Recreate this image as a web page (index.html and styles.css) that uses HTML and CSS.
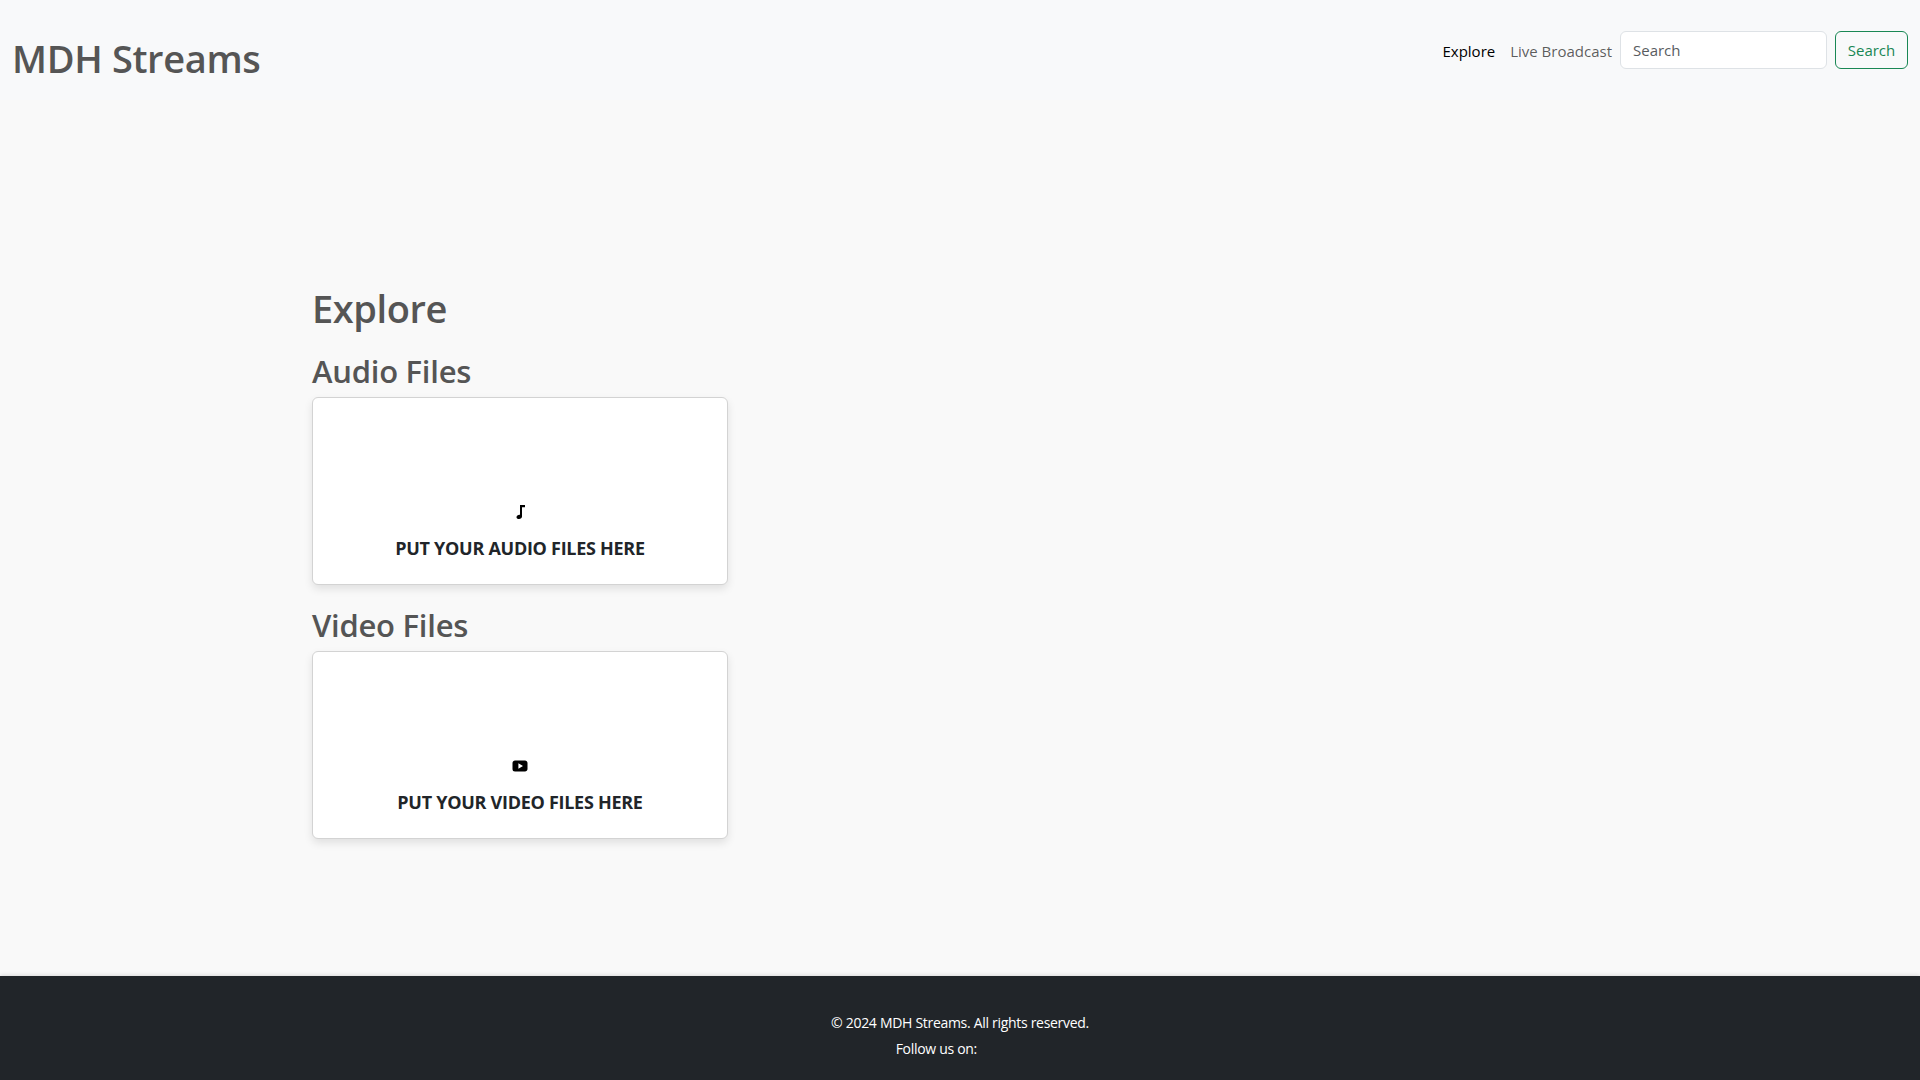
FILE: index.html
```html
<!DOCTYPE html>
<html lang="en">
<head>
    <meta charset="UTF-8">
    <meta name="viewport" content="width=device-width, initial-scale=1.0">
    <title>MDH Streams</title>
    <link rel="stylesheet" href="styles.css">
</head>
<body>
    <header class="site-header">
        <h1 class="brand">MDH Streams</h1>
        <nav class="site-nav">
            <a class="nav-link active" href="#">Explore</a>
            <a class="nav-link" href="#">Live Broadcast</a>
            <form class="search-form">
                <input class="search-input" type="search" placeholder="Search">
                <button class="search-btn" type="button">Search</button>
            </form>
        </nav>
    </header>
    <main class="explore">
        <h1 class="page-title">Explore</h1>
        <h2 class="section-title">Audio Files</h2>
        <div class="file-card">
            <svg class="file-icon" viewBox="0 0 16 16" width="16" height="16" fill="currentColor">
                <path d="M8 1h5v2.300h-3v9.200c0 1.500-1.300 2.500-3 2.500-1.500 0-2.500-.7-2.500-1.800 0-1.300 1.400-2.400 3-2.400.2 0 .4 0 .5.050V1z"/>
            </svg>
            <p class="file-label">PUT YOUR AUDIO FILES HERE</p>
        </div>
        <h2 class="section-title">Video Files</h2>
        <div class="file-card">
            <svg class="file-icon" viewBox="0 0 16 16" width="16" height="16" fill="currentColor">
                <path d="M3 2.500h10c1.400 0 2.500 1.100 2.500 2.500v6c0 1.400-1.100 2.500-2.500 2.500H3A2.500 2.500 0 0 1 .5 11V5C.5 3.600 1.600 2.500 3 2.500zM6.400 5.300v5.400L11 8 6.400 5.300z" fill-rule="evenodd"/>
            </svg>
            <p class="file-label">PUT YOUR VIDEO FILES HERE</p>
        </div>
    </main>
    <footer class="site-footer">
        <p class="footer-line">© 2024 MDH Streams. All rights reserved.</p>
        <p class="footer-line">Follow us on: <span class="social-links"></span></p>
    </footer>
</body>
</html>
```

FILE: styles.css
```css
* {
    box-sizing: border-box;
}
body {
    margin: 0;
    min-height: 100vh;
    display: flex;
    flex-direction: column;
    font-family: "Open Sans", "Noto Sans", Arial, sans-serif;
    font-size: 16px;
    color: #212529;
    background-color: #f9f9f9;
}
.site-header {
    height: 100px;
    padding: 31px 12px 0 12px;
    display: flex;
    justify-content: space-between;
    align-items: flex-start;
    background-color: #f8f9fa;
}
.brand {
    margin: 4px 0 0;
    font-size: 38px;
    line-height: 46px;
    font-weight: 600;
    color: #555;
    letter-spacing: -0.35px;
}
.site-nav {
    display: flex;
    align-items: center;
    font-size: 15px;
}
.nav-link {
    padding: 2px 8px 0;
    color: rgba(0, 0, 0, 0.65);
    text-decoration: none;
    white-space: nowrap;
}
.nav-link.active {
    color: #000;
    margin-right: -1px;
}
.search-form {
    display: flex;
    gap: 8px;
}
.search-input {
    width: 207px;
    height: 38px;
    padding: 6px 12px;
    border: 1px solid #dee2e6;
    border-radius: 6px;
    background: #fff;
    font: inherit;
}
.search-input::placeholder {
    color: #595c5f;
}
.search-btn {
    width: 73px;
    height: 38px;
    padding: 0;
    border: 1px solid #198754;
    border-radius: 6px;
    background: transparent;
    color: #198754;
    font: inherit;
}
.explore {
    flex: 1;
    padding: 184px 0 0 312px;
}
.page-title {
    margin: 0 0 20px;
    font-size: 38px;
    line-height: 48px;
    font-weight: 600;
    color: #555;
    letter-spacing: -0.4px;
}
.section-title {
    margin: 0;
    font-size: 31px;
    line-height: 38px;
    font-weight: 600;
    color: #555;
    letter-spacing: -0.25px;
}
.file-card {
    width: 416px;
    height: 188px;
    margin: 7px 0 21px;
    padding-bottom: 17px;
    display: flex;
    flex-direction: column;
    justify-content: flex-end;
    align-items: center;
    background: #fff;
    border: 1px solid #d3d3d3;
    border-radius: 6px;
    box-shadow: 0 4px 8px rgba(0, 0, 0, 0.1);
}
.file-icon {
    color: #000;
    margin-bottom: 17px;
}
.file-label {
    margin: 0 0 8px;
    font-size: 18px;
    line-height: 22px;
    font-weight: 700;
    letter-spacing: -0.28px;
    color: #212529;
}
.site-footer {
    height: 104px;
    padding-top: 36px;
    background-color: #212529;
    color: #fff;
    font-size: 14px;
    letter-spacing: -0.3px;
    text-align: center;
    box-shadow: 0 -1px 4px rgba(0, 0, 0, 0.12);
}
.footer-line {
    margin: 0 0 5px;
    line-height: 21px;
}
.social-links {
    display: inline-block;
    width: 44px;
}
```
